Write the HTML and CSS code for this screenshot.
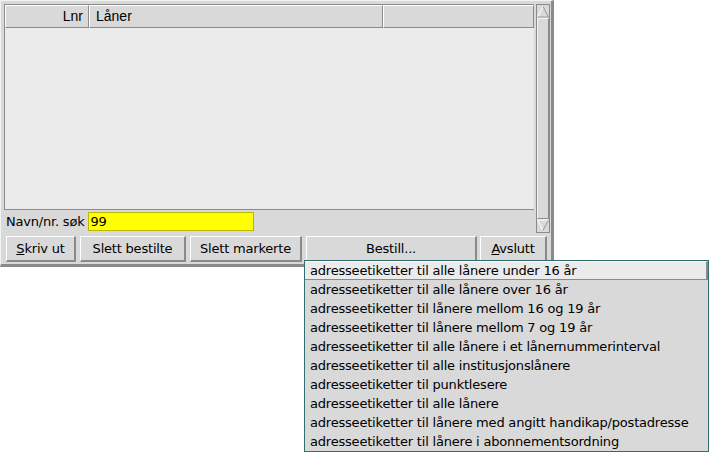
FILE: index.html
```html
<!DOCTYPE html>
<html lang="no">
<head>
  <meta charset="UTF-8" />
  <title>Lånere</title>
  <link rel="stylesheet" href="styles.css">
</head>
<body>
  <div class="window">
    <div class="main">
      <div class="left">
        <div class="table">
          <div class="table-head">
            <div class="th th-lnr">Lnr</div>
            <div class="th th-name">Låner</div>
            <div class="th th-rest"></div>
          </div>
          <div class="table-body"></div>
        </div>
        <div class="search-row">
          <label class="search-label">Navn/nr. søk</label>
          <input class="search-input" type="text" value="99">
        </div>
      </div>
      <div class="scrollbar">
        <div class="arrow arrow-up">
          <svg width="12" height="13" viewBox="0 0 12 13"><path d="M6 1.5 L11.5 12 L0.5 12 Z" fill="#d9d9d9" stroke="#fff" stroke-width="1"/><path d="M6 1.5 L11.5 12 L0.5 12" stroke="#8a8a8a" fill="none"/></svg>
        </div>
        <div class="thumb"></div>
        <div class="arrow arrow-down">
          <svg width="12" height="13" viewBox="0 0 12 13"><path d="M0.5 1 L11.5 1 L6 11.5 Z" fill="#d9d9d9" stroke="#fff" stroke-width="1"/><path d="M11.5 1 L6 11.5" stroke="#8a8a8a" fill="none"/></svg>
        </div>
      </div>
    </div>
    <div class="buttons">
      <button class="btn btn-print"><u>S</u>kriv ut</button>
      <button class="btn btn-del">Slett bestilte</button>
      <button class="btn btn-mark">Slett markerte</button>
      <button class="btn btn-order">Bestill...</button>
      <button class="btn btn-quit"><u>A</u>vslutt</button>
    </div>
  </div>

  <ul class="menu">
    <li class="menu-item active">adresseetiketter til alle lånere under 16 år</li>
    <li class="menu-item">adresseetiketter til alle lånere over 16 år</li>
    <li class="menu-item">adresseetiketter til lånere mellom 16 og 19 år</li>
    <li class="menu-item">adresseetiketter til lånere mellom 7 og 19 år</li>
    <li class="menu-item">adresseetiketter til alle lånere i et lånernummerinterval</li>
    <li class="menu-item">adresseetiketter til alle institusjonslånere</li>
    <li class="menu-item">adresseetiketter til punktlesere</li>
    <li class="menu-item">adresseetiketter til alle lånere</li>
    <li class="menu-item">adresseetiketter til lånere med angitt handikap/postadresse</li>
    <li class="menu-item">adresseetiketter til lånere i abonnementsordning</li>
  </ul>
</body>
</html>
```

FILE: styles.css
```css
body {
  margin: 0;
  background: #fff;
  font-family: "DejaVu Sans", sans-serif;
  font-size: 13px;
  letter-spacing: -0.2px;
  color: #000;
}

.window {
  width: 546px;
  height: 260px;
  background: #d9d9d9;
  border: 1px solid #f2f2f2;
  border-right: 3px solid #8a8a8a;
  border-bottom: 3px solid #8a8a8a;
  padding: 3px 1px 0 3px;
}

.main {
  display: flex;
  height: 229px;
}

.left {
  width: 530px;
  display: flex;
  flex-direction: column;
}

.table {
  height: 205px;
  border: 1px solid #8a8a8a;
  border-right: none;
  background: #ebebeb;
  display: flex;
  flex-direction: column;
}

.table-head {
  display: flex;
  height: 23px;
}

.th {
  background: #d9d9d9;
  border-top: 1px solid #fff;
  border-left: 1px solid #fff;
  border-right: 1px solid #8a8a8a;
  border-bottom: 1px solid #8a8a8a;
  font-family: "Liberation Sans", Arial, sans-serif;
  font-size: 14px;
  letter-spacing: 0;
  line-height: 21px;
  box-sizing: border-box;
  height: 23px;
}

.th-lnr {
  width: 84px;
  text-align: right;
  padding-right: 5px;
}

.th-name {
  width: 294px;
  padding-left: 6px;
}

.th-rest {
  flex: 1;
}

.table-body {
  flex: 1;
}

.search-row {
  display: flex;
  align-items: center;
  height: 23px;
  padding-left: 2px;
  gap: 3px;
}

.search-label {
  white-space: nowrap;
}

.search-input {
  width: 160px;
  height: 17px;
  margin: 0;
  padding: 0 2px;
  background: #ffff00;
  border: 1px solid #b8b800;
  font-family: "DejaVu Sans", sans-serif;
  font-size: 13px;
  letter-spacing: -0.2px;
  outline: none;
}

.scrollbar {
  width: 12px;
  margin-left: 2px;
  border: 1px solid #8a8a8a;
  background: #d9d9d9;
  display: flex;
  flex-direction: column;
}

.arrow {
  height: 13px;
  line-height: 0;
}

.thumb {
  flex: 1;
  background: #d9d9d9;
  border-top: 1px solid #f5f5f5;
  border-left: 1px solid #f5f5f5;
  border-right: 1px solid #8a8a8a;
  border-bottom: 1px solid #8a8a8a;
}

.buttons {
  display: flex;
  gap: 4px;
  margin-top: 3px;
  padding-left: 2px;
}

.btn {
  height: 26px;
  margin: 0;
  padding: 0;
  background: #d9d9d9;
  border-top: 1px solid #fff;
  border-left: 1px solid #fff;
  border-right: 2px solid #8a8a8a;
  border-bottom: 2px solid #8a8a8a;
  font-family: "DejaVu Sans", sans-serif;
  font-size: 13px;
  letter-spacing: -0.2px;
  color: #000;
}

.btn-print { width: 70px; }
.btn-del { width: 106px; }
.btn-mark { width: 112px; }
.btn-order { width: 171px; }
.btn-quit { width: 67px; margin-left: -1px; }

.menu {
  position: absolute;
  left: 304px;
  top: 260px;
  width: 403px;
  margin: 0;
  padding: 0;
  list-style: none;
  background: #d9d9d9;
  border: 1px solid #2f6f6f;
}

.menu-item {
  height: 19px;
  line-height: 19px;
  padding-left: 5px;
  white-space: nowrap;
}

.menu-item.active {
  background: #ebebeb;
  border-top: 1px solid #fff;
  border-bottom: 1px solid #8a8a8a;
  border-right: 2px solid #8a8a8a;
  height: 17px;
  line-height: 17px;
}
```
